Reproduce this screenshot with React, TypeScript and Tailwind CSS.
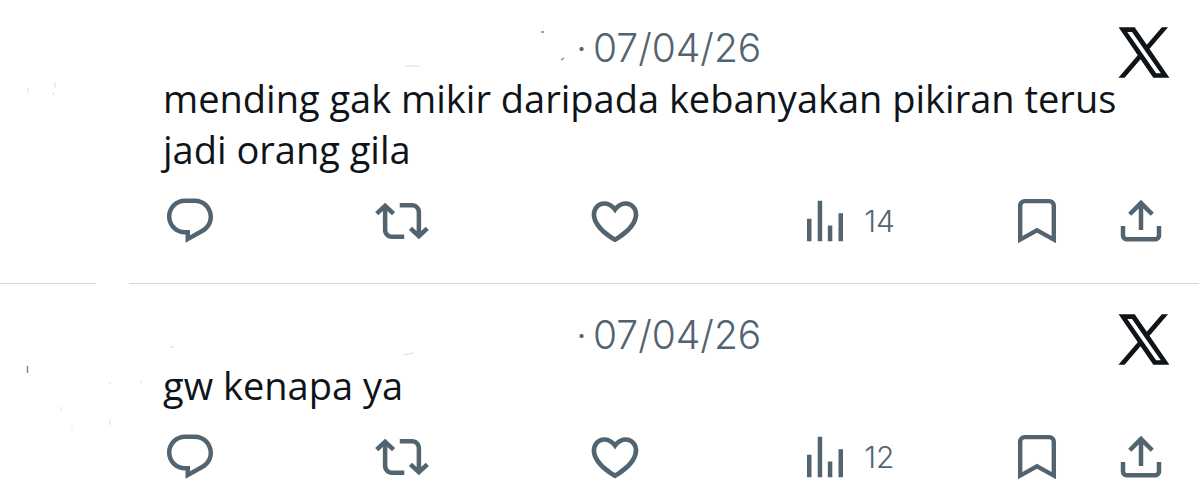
import React from 'react';
import { clsx } from 'clsx';

const icons = {
  reply: 'M1.751 10c0-4.42 3.584-8 8.005-8h4.366c4.49 0 8.129 3.64 8.129 8.13 0 2.96-1.607 5.68-4.196 7.11l-8.054 4.46v-3.69h-.067c-4.49.1-8.183-3.51-8.183-8.01zm8.005-6c-3.317 0-6.005 2.69-6.005 6 0 3.37 2.77 6.08 6.138 6.01l.351-.01h1.761v2.3l5.087-2.81c1.951-1.08 3.163-3.13 3.163-5.36 0-3.39-2.744-6.13-6.129-6.13H9.756z',
  repost: 'M4.5 3.88l4.432 4.14-1.364 1.46L5.5 7.55V16c0 1.1.896 2 2 2H13v2H7.5c-2.209 0-4-1.79-4-4V7.55L1.432 9.48.068 8.02 4.5 3.88zM16.5 6H11V4h5.5c2.209 0 4 1.79 4 4v8.45l2.068-1.93 1.364 1.46-4.432 4.14-4.432-4.14 1.364-1.46 2.068 1.93V8c0-1.1-.896-2-2-2z',
  like: 'M16.697 5.5c-1.222-.06-2.679.51-3.89 2.16l-.805 1.09-.806-1.09C9.984 6.01 8.526 5.44 7.304 5.5c-1.243.07-2.349.78-2.91 1.91-.552 1.12-.633 2.78.479 4.82 1.074 1.97 3.257 4.27 7.129 6.61 3.87-2.34 6.052-4.64 7.126-6.61 1.111-2.04 1.03-3.7.477-4.82-.561-1.13-1.666-1.84-2.908-1.91zm4.187 7.69c-1.351 2.48-4.001 5.12-8.379 7.67l-.503.3-.504-.3c-4.379-2.55-7.029-5.19-8.382-7.67-1.36-2.5-1.41-4.86-.514-6.67.887-1.79 2.647-2.91 4.601-3.01 1.651-.09 3.368.56 4.798 2.01 1.429-1.45 3.146-2.1 4.796-2.01 1.954.1 3.714 1.22 4.601 3.01.896 1.81.846 4.17-.514 6.67z',
  views: 'M8.75 21V3h2v18h-2zM18 21V8.5h2V21h-2zM4 21l.004-10h2L6 21H4zm9.248 0v-7h2v7h-2z',
  bookmark: 'M3.55 5.2c0-1.66 1.34-3 3-3h10.9c1.66 0 3 1.34 3 3v16.7L12 17.2l-8.45 4.7zM6.55 4.15c-.58 0-1.05.47-1.05 1.05v13.45L12 15.05l6.5 3.6V5.2c0-.58-.47-1.05-1.05-1.05z',
  share: 'M12 2.59l5.7 5.7-1.41 1.42L13 6.41V16h-2V6.41l-3.3 3.3-1.41-1.42L12 2.59zM21 14.2v4.1c0 1.6-1.2 2.8-2.8 2.8H5.8c-1.6 0-2.8-1.2-2.8-2.8v-4.1h2v4.1c0 .5.3.8.8.8h12.4c.5 0 .8-.3.8-.8v-4.1z',
};

const Icon = ({ name, large }: { name: keyof typeof icons; large?: boolean }) => (
  <svg viewBox="0 0 24 24" fill="currentColor" aria-hidden="true" className={clsx('shrink-0', large ? 'size-14' : 'size-[54px]')}>
    <path d={icons[name]} />
  </svg>
);

const XLogo = () => (
  <svg viewBox="0 0 1200 1227" fill="currentColor" aria-hidden="true" className="h-[49px] w-12 overflow-visible">
    <path
      stroke="currentColor"
      strokeWidth="38"
      d="M714.163 519.284L1160.89 0H1055.03L667.137 450.887L357.328 0H0L468.492 681.821L0 1226.37H105.866L515.491 750.218L842.672 1226.37H1200L714.137 519.284H714.163ZM569.165 687.828L521.697 619.934L144.011 79.6944H306.615L611.412 515.685L658.88 583.579L1055.08 1150.3H892.476L569.165 687.854V687.828Z"
    />
  </svg>
);

// faint strokes left where the avatar and name are blanked out
const Smudges = ({ d, dark }: { d: string; dark?: string }) => (
  <svg width="620" height="160" fill="none" aria-hidden="true" className="pointer-events-none absolute left-0 top-0">
    <path d={d} stroke="#d9dcde" />
    {dark && <path d={dark} stroke="#7d8790" strokeWidth="1.5" />}
  </svg>
);

type TweetProps = {
  date: string;
  text: string;
  views: number;
  smudges: string;
  darkSmudges?: string;
};

const Tweet = ({ date, text, views, smudges, darkSmudges }: TweetProps) => (
  <article className="relative pl-[163px] pr-[31px]">
    <Smudges d={smudges} dark={darkSmudges} />
    <header className="flex h-[73px] items-start justify-between pt-7">
      <div className="flex flex-1 text-[39px] font-light leading-10 text-[#536471]">
        <div className="w-[413px]" />
        <span className="w-[17px]">·</span>
        <time dateTime="2026-04-07">{date}</time>
      </div>
      <a href="#" aria-label="X" className="text-[#0f1419]"><XLogo /></a>
    </header>
    <p className="font-['Open_Sans',sans-serif] text-[38px] leading-[51px] text-[#0f1419]">{text}</p>
    <div className="mt-[19px] flex h-[54px] items-center text-[#536471]">
      <button aria-label="Reply" className="flex flex-1"><Icon name="reply" /></button>
      <button aria-label="Repost" className="flex flex-1"><Icon name="repost" /></button>
      <button aria-label="Like" className="flex flex-1"><Icon name="like" large /></button>
      <button aria-label="Views" className="flex flex-1 items-center gap-3 text-[30px] font-light leading-8">
        <Icon name="views" />
        <span>{views}</span>
      </button>
      <div className="flex gap-[50px]">
        <button aria-label="Bookmark"><Icon name="bookmark" /></button>
        <button aria-label="Share"><Icon name="share" /></button>
      </div>
    </div>
  </article>
);

export default function App() {
  return (
    <main className="min-h-screen overflow-hidden bg-white font-['Inter',sans-serif]">
      <Tweet
        date="07/04/26"
        text="mending gak mikir daripada kebanyakan pikiran terus jadi orang gila"
        views={14}
        smudges="M28 88v5M55 82v6M53 92l1 3M405 66h15"
        darkSmudges="M541 32h3M561 60l3-2"
      />
      <div className="mb-[3px] mt-[35px] flex gap-[33px]">
        <div className="h-px w-24 bg-[#d5dade]" />
        <div className="h-px flex-1 bg-[#d5dade]" />
      </div>
      <Tweet
        date="07/04/26"
        text="gw kenapa ya"
        views={12}
        smudges="M170 60h4M404 68l9-2M109 97l2-2M141 93v3M60 124l2-4M110 133v5M71 142h2"
        darkSmudges="M27.5 79v7"
      />
    </main>
  );
}
